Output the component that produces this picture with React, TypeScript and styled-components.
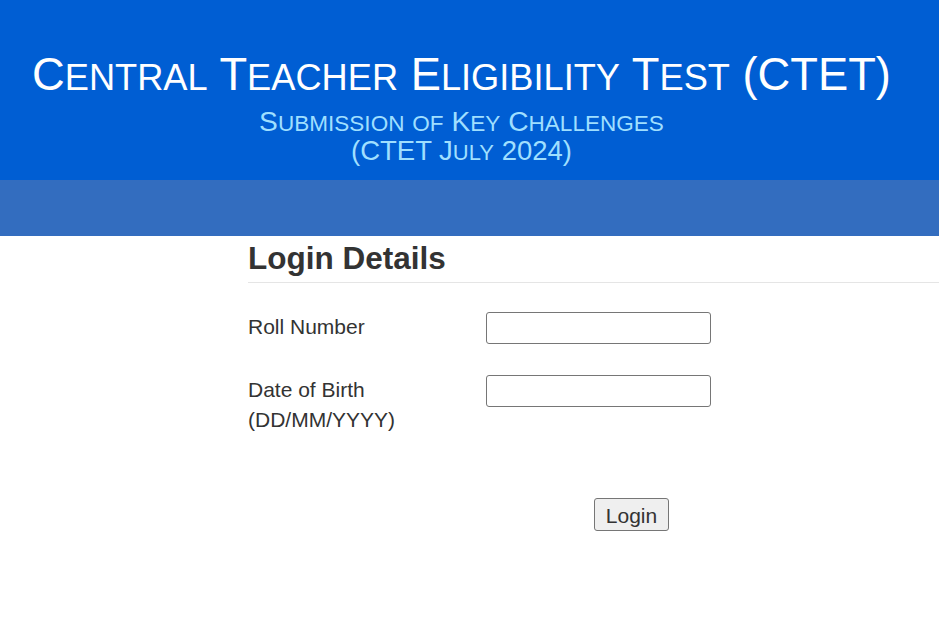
import React from "react";
import styled, { createGlobalStyle } from "styled-components";

const Global = createGlobalStyle`
  html, body { margin: 0; padding: 0; background: #fff; }
  body { font-family: "Liberation Sans", Arial, sans-serif; color: #333; }
`;

const Header = styled.header`
  background: #005ed3;
  height: 180px;
  box-sizing: border-box;
  padding: 51px 16px 0 0;
  display: flex;
  flex-direction: column;
  align-items: center;
  font-family: "Liberation Sans", Arial, sans-serif;
`;

const Title = styled.h1`
  margin: 0;
  font-weight: normal;
  font-size: 45.3px;
  line-height: 48px;
  color: #fff;
  white-space: nowrap;
`;

const Small = styled.span`
  font-size: 0.8em;
  line-height: 1;
  text-transform: uppercase;
`;

const SubLine = styled.div<{ $size: number; $gap: number }>`
  margin-top: ${(p) => p.$gap}px;
  font-size: ${(p) => p.$size}px;
  line-height: 30px;
  color: #9fdfff;
  white-space: nowrap;
`;

const NavBar = styled.nav`
  background: #336dbf;
  height: 56px;
`;

const Main = styled.main`
  padding-left: 248px;
`;

const Heading = styled.h2`
  margin: 0;
  padding: 4px 0 5.5px;
  font-size: 31.5px;
  line-height: 36px;
  font-weight: bold;
  color: #333;
  border-bottom: 1px solid #e5e5e5;
`;

const Form = styled.form`
  padding-top: 29px;
`;

const Row = styled.div`
  display: grid;
  grid-template-columns: 238px 225px;
  align-items: start;
  margin-bottom: 31px;
`;

const Label = styled.label`
  font-size: 21px;
  line-height: 30px;
  color: #333;
`;

const Input = styled.input`
  box-sizing: border-box;
  width: 225px;
  height: 32px;
  margin: 0;
  border: 1px solid #767676;
  border-radius: 3px;
  background: #fff;
  font-size: 16px;
`;

const ButtonRow = styled.div`
  padding-left: 346px;
  padding-top: 32px;
`;

const Button = styled.button`
  box-sizing: border-box;
  width: 75px;
  height: 33px;
  font-family: "Liberation Sans", Arial, sans-serif;
  font-size: 21px;
  line-height: 1;
  color: #333;
  background: #efefef;
  border: 1px solid #767676;
  border-radius: 3px;
  padding: 3px 0 0;
`;

const SC = ({ first, rest }: { first: string; rest: string }) => (
  <>
    {first}
    <Small>{rest}</Small>
  </>
);

export default function App() {
  return (
    <>
      <Global />
      <Header>
        <Title>
          <SC first="C" rest="entral" /> <SC first="T" rest="eacher" />{" "}
          <SC first="E" rest="ligibility" /> <SC first="T" rest="est" /> (CTET)
        </Title>
        <SubLine $size={28.2} $gap={7}>
          <SC first="S" rest="ubmission" /> <Small>of</Small> <SC first="K" rest="ey" />{" "}
          <SC first="C" rest="hallenges" />
        </SubLine>
        <SubLine $size={27.5} $gap={0}>
          (CTET <SC first="J" rest="uly" /> 2024)
        </SubLine>
      </Header>
      <NavBar />
      <Main>
        <Heading>Login Details</Heading>
        <Form onSubmit={(e) => e.preventDefault()}>
          <Row>
            <Label>Roll Number</Label>
            <Input type="text" />
          </Row>
          <Row>
            <Label>
              Date of Birth
              <br />
              (DD/MM/YYYY)
            </Label>
            <Input type="text" />
          </Row>
          <ButtonRow>
            <Button type="submit">Login</Button>
          </ButtonRow>
        </Form>
      </Main>
    </>
  );
}
